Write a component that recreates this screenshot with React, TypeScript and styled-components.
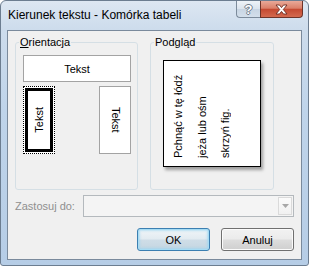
import React from "react";
import styled, { createGlobalStyle } from "styled-components";

const Global = createGlobalStyle`
  html, body { margin: 0; padding: 0; background: #ffffff; }
  body { font-family: "Liberation Sans", Arial, sans-serif; }
  #root { width: 309px; height: 266px; }
`;

const Window = styled.div`
  box-sizing: border-box;
  width: 309px;
  height: 266px;
  display: flex;
  flex-direction: column;
  border: 1px solid #6c7d90;
  border-radius: 6px 6px 3px 3px;
  background: linear-gradient(180deg, #dde7f2 0px, #cddcec 28px, #bfd4ea 110px, #b6cde6 100%);
  overflow: hidden;
`;

const TitleBar = styled.div`
  height: 29px;
  flex: none;
  display: flex;
  align-items: flex-start;
  padding: 0 5px 0 7px;
`;

const Title = styled.span`
  flex: 1;
  margin-top: 7px;
  font-size: 12px;
  line-height: 14px;
  color: #000;
  white-space: nowrap;
`;

const CaptionButtons = styled.div`
  display: flex;
`;

const HelpButton = styled.div`
  box-sizing: border-box;
  width: 24px;
  height: 17px;
  border: 1px solid #7c8b9b;
  border-top: none;
  border-right: none;
  border-radius: 0 0 0 4px;
  background: linear-gradient(180deg, #eef3f8 0%, #dbe4ee 48%, #c8d5e3 52%, #d3dfeb 100%);
  display: flex;
  align-items: center;
  justify-content: center;
  font-size: 13px;
  font-weight: bold;
  line-height: 13px;
  color: #ffffff;
  text-shadow: 1px 0 0 #6f7c8a, -1px 0 0 #6f7c8a, 0 1px 0 #6f7c8a, 0 -1px 0 #6f7c8a;
`;

const CloseButton = styled.div`
  box-sizing: border-box;
  width: 43px;
  height: 17px;
  border: 1px solid #6e3429;
  border-top: none;
  border-radius: 0 0 4px 0;
  background: linear-gradient(180deg, #e9a999 0%, #db8069 45%, #c54a32 52%, #d46a4f 100%);
  display: flex;
  align-items: center;
  justify-content: center;
`;

const Client = styled.div`
  flex: 1;
  margin: 0 6px 5px;
  border: 1px solid #7a8a9c;
  background: #f0f0f0;
  padding: 5px 7px 8px;
  display: flex;
  flex-direction: column;
  font-size: 11px;
  color: #000;
`;

const GroupsRow = styled.div`
  display: flex;
  gap: 12px;
`;

const Group = styled.fieldset<{ $w: number }>`
  box-sizing: border-box;
  width: ${(p) => p.$w}px;
  height: 154px;
  margin: 0;
  padding: 0;
  min-inline-size: 0;
  border: 1px solid #d5dfe5;
  border-radius: 3px;
`;

const Legend = styled.legend`
  margin-left: 3px;
  padding: 0 1px;
  font-size: 11px;
  line-height: 13px;
`;

const AccessKey = styled.span`
  text-decoration: underline;
`;

const OrientationGrid = styled.div`
  display: flex;
  flex-direction: column;
  gap: 4px;
  padding: 6px 0 0 7px;
  width: 108px;
`;

const VerticalRow = styled.div`
  display: flex;
  justify-content: space-between;
`;

const OptionButton = styled.div<{ $w: number; $h: number; $selected?: boolean }>`
  box-sizing: border-box;
  width: ${(p) => p.$w}px;
  height: ${(p) => p.$h}px;
  background: #ffffff;
  border: 1px ${(p) => (p.$selected ? "dotted #000" : "solid #a3a3a3")};
  box-shadow: ${(p) => (p.$selected ? "inset 0 0 0 1px #fff, inset 0 0 0 4px #000" : "none")};
  display: flex;
  align-items: center;
  justify-content: center;
  font-size: 11px;
`;

const VText = styled.span<{ $up?: boolean }>`
  writing-mode: vertical-rl;
  transform: ${(p) => (p.$up ? "rotate(180deg)" : "none")};
  line-height: 13px;
  white-space: nowrap;
`;

const Page = styled.div`
  box-sizing: border-box;
  width: 98px;
  height: 107px;
  margin: 11px 0 0 12px;
  background: #ffffff;
  border: 1px solid #000;
  box-shadow: 2px 3px 3px rgba(0, 0, 0, 0.35);
  display: flex;
  align-items: flex-start;
`;

const PreviewText = styled.div`
  writing-mode: vertical-rl;
  transform: rotate(180deg);
  width: 71px;
  height: 97px;
  margin-left: 3px;
  font-size: 11px;
  line-height: 23.5px;
  white-space: nowrap;
`;

const ApplyRow = styled.div`
  margin-top: 5px;
  height: 22px;
  display: flex;
  align-items: center;
  justify-content: space-between;
`;

const ApplyLabel = styled.span`
  color: #8f8f8f;
  font-size: 11px;
`;

const Combo = styled.div`
  box-sizing: border-box;
  width: 211px;
  height: 22px;
  border: 1px solid #b4b9bd;
  background: #f4f4f4;
  display: flex;
  justify-content: flex-end;
  padding: 1px;
`;

const ComboArrow = styled.div`
  box-sizing: border-box;
  width: 14px;
  height: 18px;
  border: 1px solid #dadada;
  background: linear-gradient(180deg, #fbfbfb, #f1f1f1);
  display: flex;
  align-items: center;
  justify-content: center;
`;

const ButtonRow = styled.div`
  margin-top: 11px;
  display: flex;
  justify-content: flex-end;
  gap: 11px;
`;

const DialogButton = styled.div<{ $default?: boolean }>`
  box-sizing: border-box;
  width: 73px;
  height: 23px;
  border-radius: 3px;
  border: 1px solid ${(p) => (p.$default ? "#3c7fb1" : "#707070")};
  background: ${(p) =>
    p.$default
      ? "linear-gradient(180deg, #f0f5f8 0%, #e2ebf1 48%, #cfdde7 52%, #c4d6e2 100%)"
      : "linear-gradient(180deg, #f2f2f2 0%, #ebebeb 48%, #dddddd 52%, #cfcfcf 100%)"};
  box-shadow: ${(p) =>
    p.$default ? "inset 0 0 0 1px #a6dcf4, inset 0 0 2px 2px rgba(150,210,240,0.6)" : "inset 0 0 0 1px #fbfbfb"};
  display: flex;
  align-items: center;
  justify-content: center;
  font-size: 11px;
  color: #000;
`;

export default function App() {
  return (
    <>
      <Global />
      <Window>
        <TitleBar>
          <Title>Kierunek tekstu - Komórka tabeli</Title>
          <CaptionButtons>
            <HelpButton>?</HelpButton>
            <CloseButton>
              <svg width="13" height="11" viewBox="0 0 13 11">
                <path
                  d="M1 1 H4.5 L6.5 3.6 L8.5 1 H12 L8.3 5.5 L12 10 H8.5 L6.5 7.4 L4.5 10 H1 L4.7 5.5 Z"
                  fill="#ffffff"
                  stroke="#6b2a20"
                  strokeWidth="0.9"
                  strokeLinejoin="round"
                />
              </svg>
            </CloseButton>
          </CaptionButtons>
        </TitleBar>
        <Client>
          <GroupsRow>
            <Group $w={123}>
              <Legend>
                <AccessKey>O</AccessKey>rientacja
              </Legend>
              <OrientationGrid>
                <OptionButton $w={108} $h={27}>
                  Tekst
                </OptionButton>
                <VerticalRow>
                  <OptionButton $w={32} $h={68} $selected>
                    <VText $up>Tekst</VText>
                  </OptionButton>
                  <OptionButton $w={32} $h={68}>
                    <VText>Tekst</VText>
                  </OptionButton>
                </VerticalRow>
              </OrientationGrid>
            </Group>
            <Group $w={124}>
              <Legend>Podgląd</Legend>
              <Page>
                <PreviewText>
                  Pchnąć w tę łódź
                  <br />
                  jeża lub ośm
                  <br />
                  skrzyń fig.
                </PreviewText>
              </Page>
            </Group>
          </GroupsRow>
          <ApplyRow>
            <ApplyLabel>Zastosuj do:</ApplyLabel>
            <Combo>
              <ComboArrow>
                <svg width="7" height="4" viewBox="0 0 7 4">
                  <path d="M0 0 H7 L3.5 4 Z" fill="#a8a8a8" />
                </svg>
              </ComboArrow>
            </Combo>
          </ApplyRow>
          <ButtonRow>
            <DialogButton $default>OK</DialogButton>
            <DialogButton>Anuluj</DialogButton>
          </ButtonRow>
        </Client>
      </Window>
    </>
  );
}
